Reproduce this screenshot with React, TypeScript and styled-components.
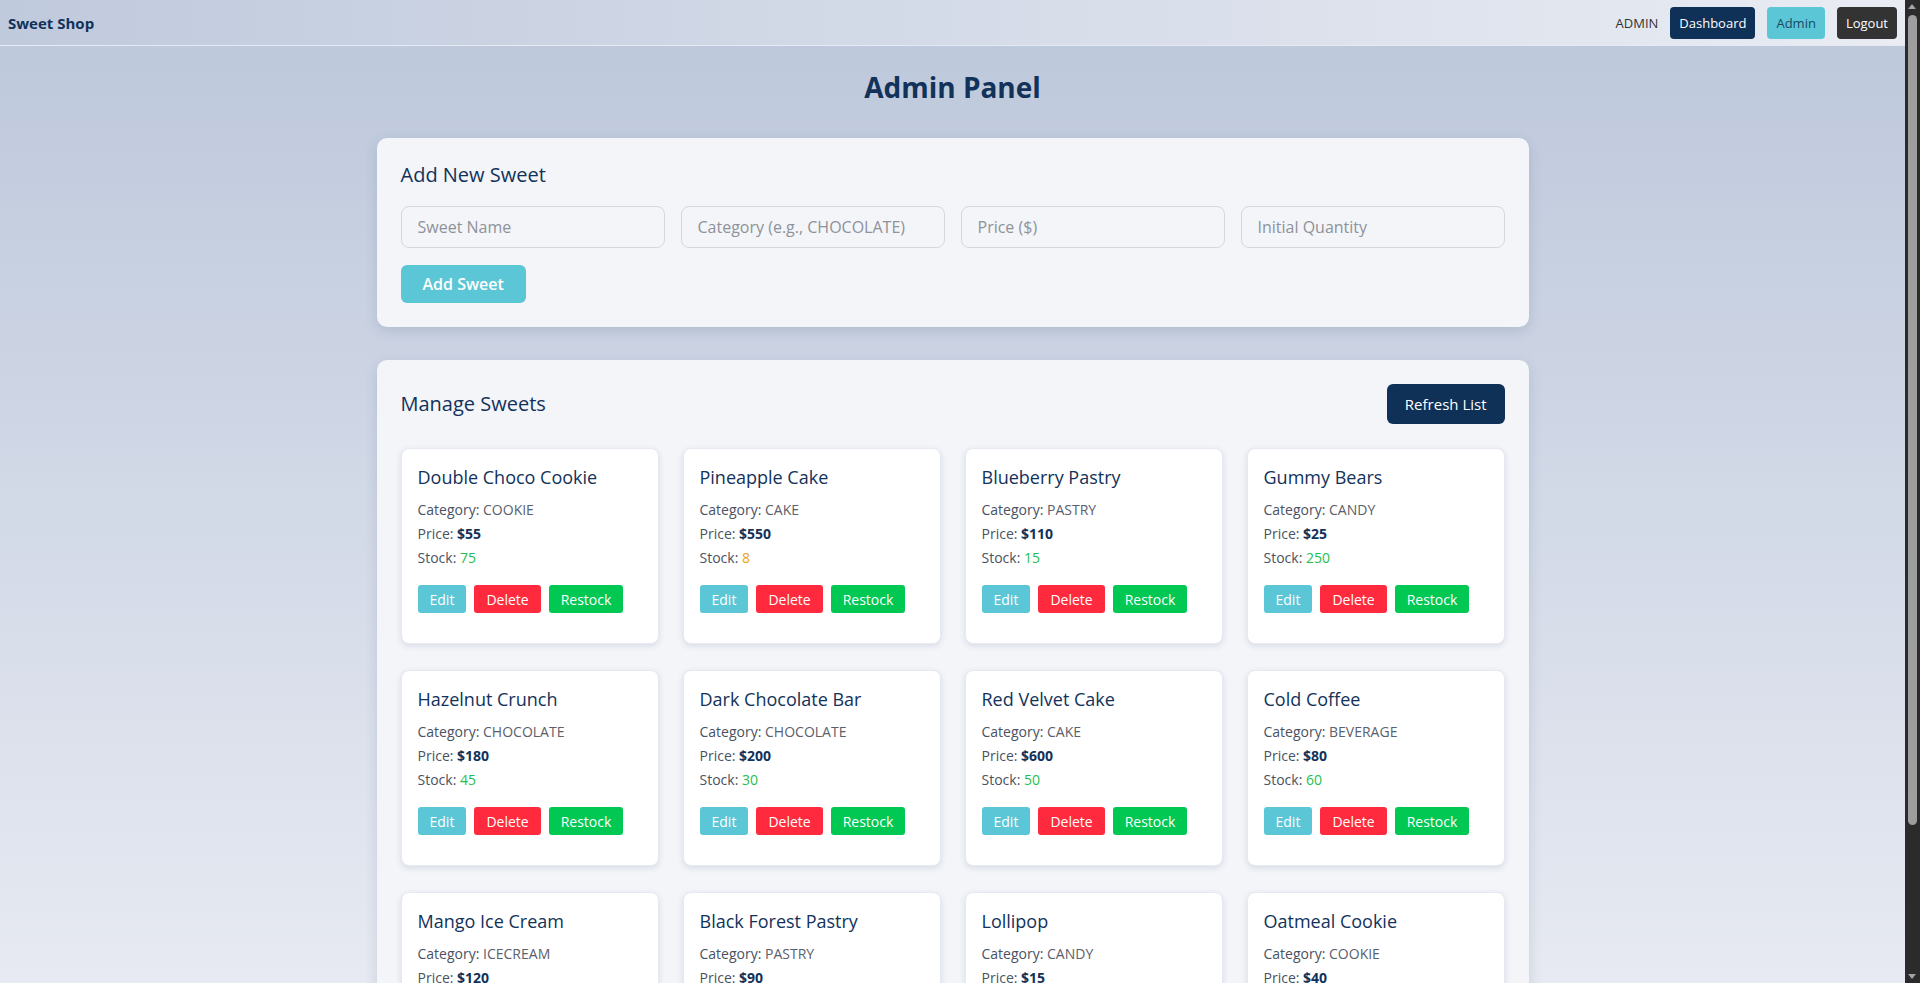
import React from 'react';
import styled, { createGlobalStyle } from 'styled-components';

const GlobalStyle = createGlobalStyle`
  * { box-sizing: border-box; }
  html { scrollbar-width: none; }
  body {
    margin: 0;
    font-family: "Open Sans", "Noto Sans", sans-serif;
    color: #12325a;
    background: linear-gradient(180deg, #bcc7db 0%, #e7eaf2 100%) fixed;
    min-height: 100vh;
  }
`;

const Page = styled.div`
  margin-right: 15px;
`;

const ScrollTrack = styled.div`
  position: fixed;
  top: 0;
  right: 0;
  width: 15px;
  height: 100vh;
  background: #2b2b2b;
  z-index: 10;
`;

const ScrollThumb = styled.div`
  position: absolute;
  left: 3px;
  top: 15px;
  width: 9px;
  height: 810px;
  border-radius: 5px;
  background: #9e9e9e;
`;

const ScrollArrow = styled.div<{ $dir: 'up' | 'down' }>`
  position: absolute;
  left: 3px;
  width: 0;
  height: 0;
  border-left: 4.5px solid transparent;
  border-right: 4.5px solid transparent;
  ${(p) =>
    p.$dir === 'up'
      ? 'top: 4px; border-bottom: 5px solid #a3a3a3;'
      : 'bottom: 4px; border-top: 5px solid #a3a3a3;'}
`;

const NavBar = styled.nav`
  height: 46px;
  display: flex;
  align-items: center;
  justify-content: space-between;
  padding: 0 8px;
  background: linear-gradient(90deg, #c0cadd 0%, #e9ecf3 100%);
  border-bottom: 1px solid #e6eaf2;
`;

const Brand = styled.div`
  font-weight: 700;
  font-size: 15px;
  color: #12325a;
`;

const NavRight = styled.div`
  display: flex;
  align-items: center;
  gap: 12px;
`;

const RoleLabel = styled.span`
  font-size: 13px;
  color: #333;
`;

const navColors = {
  dashboard: { bg: '#0f3057', fg: '#ffffff' },
  admin: { bg: '#5bc6d6', fg: '#174a66' },
  logout: { bg: '#333333', fg: '#ffffff' },
};

const NavButton = styled.button<{ $variant: keyof typeof navColors }>`
  height: 32px;
  padding: 0 9px;
  border: none;
  border-radius: 4px;
  font-family: inherit;
  font-size: 13px;
  background: ${(p) => navColors[p.$variant].bg};
  color: ${(p) => navColors[p.$variant].fg};
  cursor: pointer;
`;

const Main = styled.main`
  max-width: 1152px;
  margin: 0 auto;
  padding: 22px 0 46px;
`;

const PageTitle = styled.h1`
  margin: 0 0 32px;
  text-align: center;
  font-size: 28px;
  line-height: 38px;
  font-weight: 700;
  color: #12325a;
`;

const Panel = styled.section`
  background: #f3f5f9;
  border-radius: 10px;
  padding: 24px;
  box-shadow: 0 4px 14px rgba(30, 50, 90, 0.14);
  & + & { margin-top: 33px; }
`;

const PanelTitle = styled.h2`
  margin: 0;
  font-size: 20px;
  line-height: 26px;
  font-weight: 500;
  color: #12325a;
`;

const FormGrid = styled.div`
  display: grid;
  grid-template-columns: repeat(4, 1fr);
  gap: 16px;
  margin-top: 18px;
`;

const Input = styled.input`
  height: 42px;
  padding: 0 16px;
  border: 1px solid #d3d7df;
  border-radius: 8px;
  background: #f3f5f9;
  font-family: inherit;
  font-size: 16px;
  color: #333;
  &::placeholder { color: #8e929a; }
`;

const PrimaryButton = styled.button<{ $bg: string; $tall?: boolean }>`
  height: ${(p) => (p.$tall ? '40px' : '38px')};
  padding: 0 ${(p) => (p.$tall ? '18px' : '22px')};
  border: none;
  border-radius: 6px;
  background: ${(p) => p.$bg};
  color: #fff;
  font-family: inherit;
  font-size: ${(p) => (p.$tall ? '15px' : '16px')};
  font-weight: ${(p) => (p.$tall ? 400 : 600)};
  cursor: pointer;
`;

const AddRow = styled.div`
  margin-top: 17px;
`;

const PanelHeader = styled.div`
  display: flex;
  align-items: center;
  justify-content: space-between;
  margin-bottom: 24px;
`;

const CardGrid = styled.div`
  display: grid;
  grid-template-columns: repeat(4, 1fr);
  column-gap: 24px;
  row-gap: 26px;
`;

const Card = styled.div`
  background: #fff;
  border: 1px solid #e6e9ef;
  border-radius: 8px;
  padding: 16px 16px 30px;
  box-shadow: 0 2px 6px rgba(20, 40, 80, 0.12);
`;

const CardTitle = styled.h3`
  margin: 0 0 9px;
  font-size: 18px;
  line-height: 24px;
  font-weight: 500;
  color: #12325a;
`;

const InfoLine = styled.p`
  margin: 0;
  font-size: 14px;
  line-height: 24px;
  color: #4a5262;
`;

const valueTone = {
  plain: { color: '#5a606c', weight: 400 },
  price: { color: '#12325a', weight: 700 },
  good: { color: '#1fbf4f', weight: 400 },
  low: { color: '#e8a317', weight: 400 },
};

const Value = styled.span<{ $tone: keyof typeof valueTone }>`
  color: ${(p) => valueTone[p.$tone].color};
  font-weight: ${(p) => valueTone[p.$tone].weight};
`;

const Actions = styled.div`
  display: flex;
  gap: 8px;
  margin-top: 15px;
`;

const ActionButton = styled.button<{ $bg: string }>`
  height: 28px;
  padding: 0 12px;
  border: none;
  border-radius: 3px;
  background: ${(p) => p.$bg};
  color: #fff;
  font-family: inherit;
  font-size: 14px;
  cursor: pointer;
`;

type Sweet = { name: string; category: string; price: number; stock: number };

const sweets: Sweet[] = [
  { name: 'Double Choco Cookie', category: 'COOKIE', price: 55, stock: 75 },
  { name: 'Pineapple Cake', category: 'CAKE', price: 550, stock: 8 },
  { name: 'Blueberry Pastry', category: 'PASTRY', price: 110, stock: 15 },
  { name: 'Gummy Bears', category: 'CANDY', price: 25, stock: 250 },
  { name: 'Hazelnut Crunch', category: 'CHOCOLATE', price: 180, stock: 45 },
  { name: 'Dark Chocolate Bar', category: 'CHOCOLATE', price: 200, stock: 30 },
  { name: 'Red Velvet Cake', category: 'CAKE', price: 600, stock: 50 },
  { name: 'Cold Coffee', category: 'BEVERAGE', price: 80, stock: 60 },
  { name: 'Mango Ice Cream', category: 'ICECREAM', price: 120, stock: 40 },
  { name: 'Black Forest Pastry', category: 'PASTRY', price: 90, stock: 25 },
  { name: 'Lollipop', category: 'CANDY', price: 15, stock: 300 },
  { name: 'Oatmeal Cookie', category: 'COOKIE', price: 40, stock: 65 },
];

export default function App() {
  return (
    <>
      <GlobalStyle />
      <Page>
        <NavBar>
          <Brand>Sweet Shop</Brand>
          <NavRight>
            <RoleLabel>ADMIN</RoleLabel>
            <NavButton $variant="dashboard">Dashboard</NavButton>
            <NavButton $variant="admin">Admin</NavButton>
            <NavButton $variant="logout">Logout</NavButton>
          </NavRight>
        </NavBar>
        <Main>
          <PageTitle>Admin Panel</PageTitle>
          <Panel>
            <PanelTitle>Add New Sweet</PanelTitle>
            <FormGrid>
              <Input placeholder="Sweet Name" />
              <Input placeholder="Category (e.g., CHOCOLATE)" />
              <Input placeholder="Price ($)" />
              <Input placeholder="Initial Quantity" />
            </FormGrid>
            <AddRow>
              <PrimaryButton $bg="#5bc6d6">Add Sweet</PrimaryButton>
            </AddRow>
          </Panel>
          <Panel>
            <PanelHeader>
              <PanelTitle>Manage Sweets</PanelTitle>
              <PrimaryButton $bg="#0f3057" $tall>
                Refresh List
              </PrimaryButton>
            </PanelHeader>
            <CardGrid>
              {sweets.map((s) => (
                <Card key={s.name}>
                  <CardTitle>{s.name}</CardTitle>
                  <InfoLine>
                    Category: <Value $tone="plain">{s.category}</Value>
                  </InfoLine>
                  <InfoLine>
                    Price: <Value $tone="price">${s.price}</Value>
                  </InfoLine>
                  <InfoLine>
                    Stock: <Value $tone={s.stock < 10 ? 'low' : 'good'}>{s.stock}</Value>
                  </InfoLine>
                  <Actions>
                    <ActionButton $bg="#5bc6d6">Edit</ActionButton>
                    <ActionButton $bg="#ff2a3d">Delete</ActionButton>
                    <ActionButton $bg="#00c853">Restock</ActionButton>
                  </Actions>
                </Card>
              ))}
            </CardGrid>
          </Panel>
        </Main>
      </Page>
      <ScrollTrack>
        <ScrollArrow $dir="up" />
        <ScrollThumb />
        <ScrollArrow $dir="down" />
      </ScrollTrack>
    </>
  );
}
